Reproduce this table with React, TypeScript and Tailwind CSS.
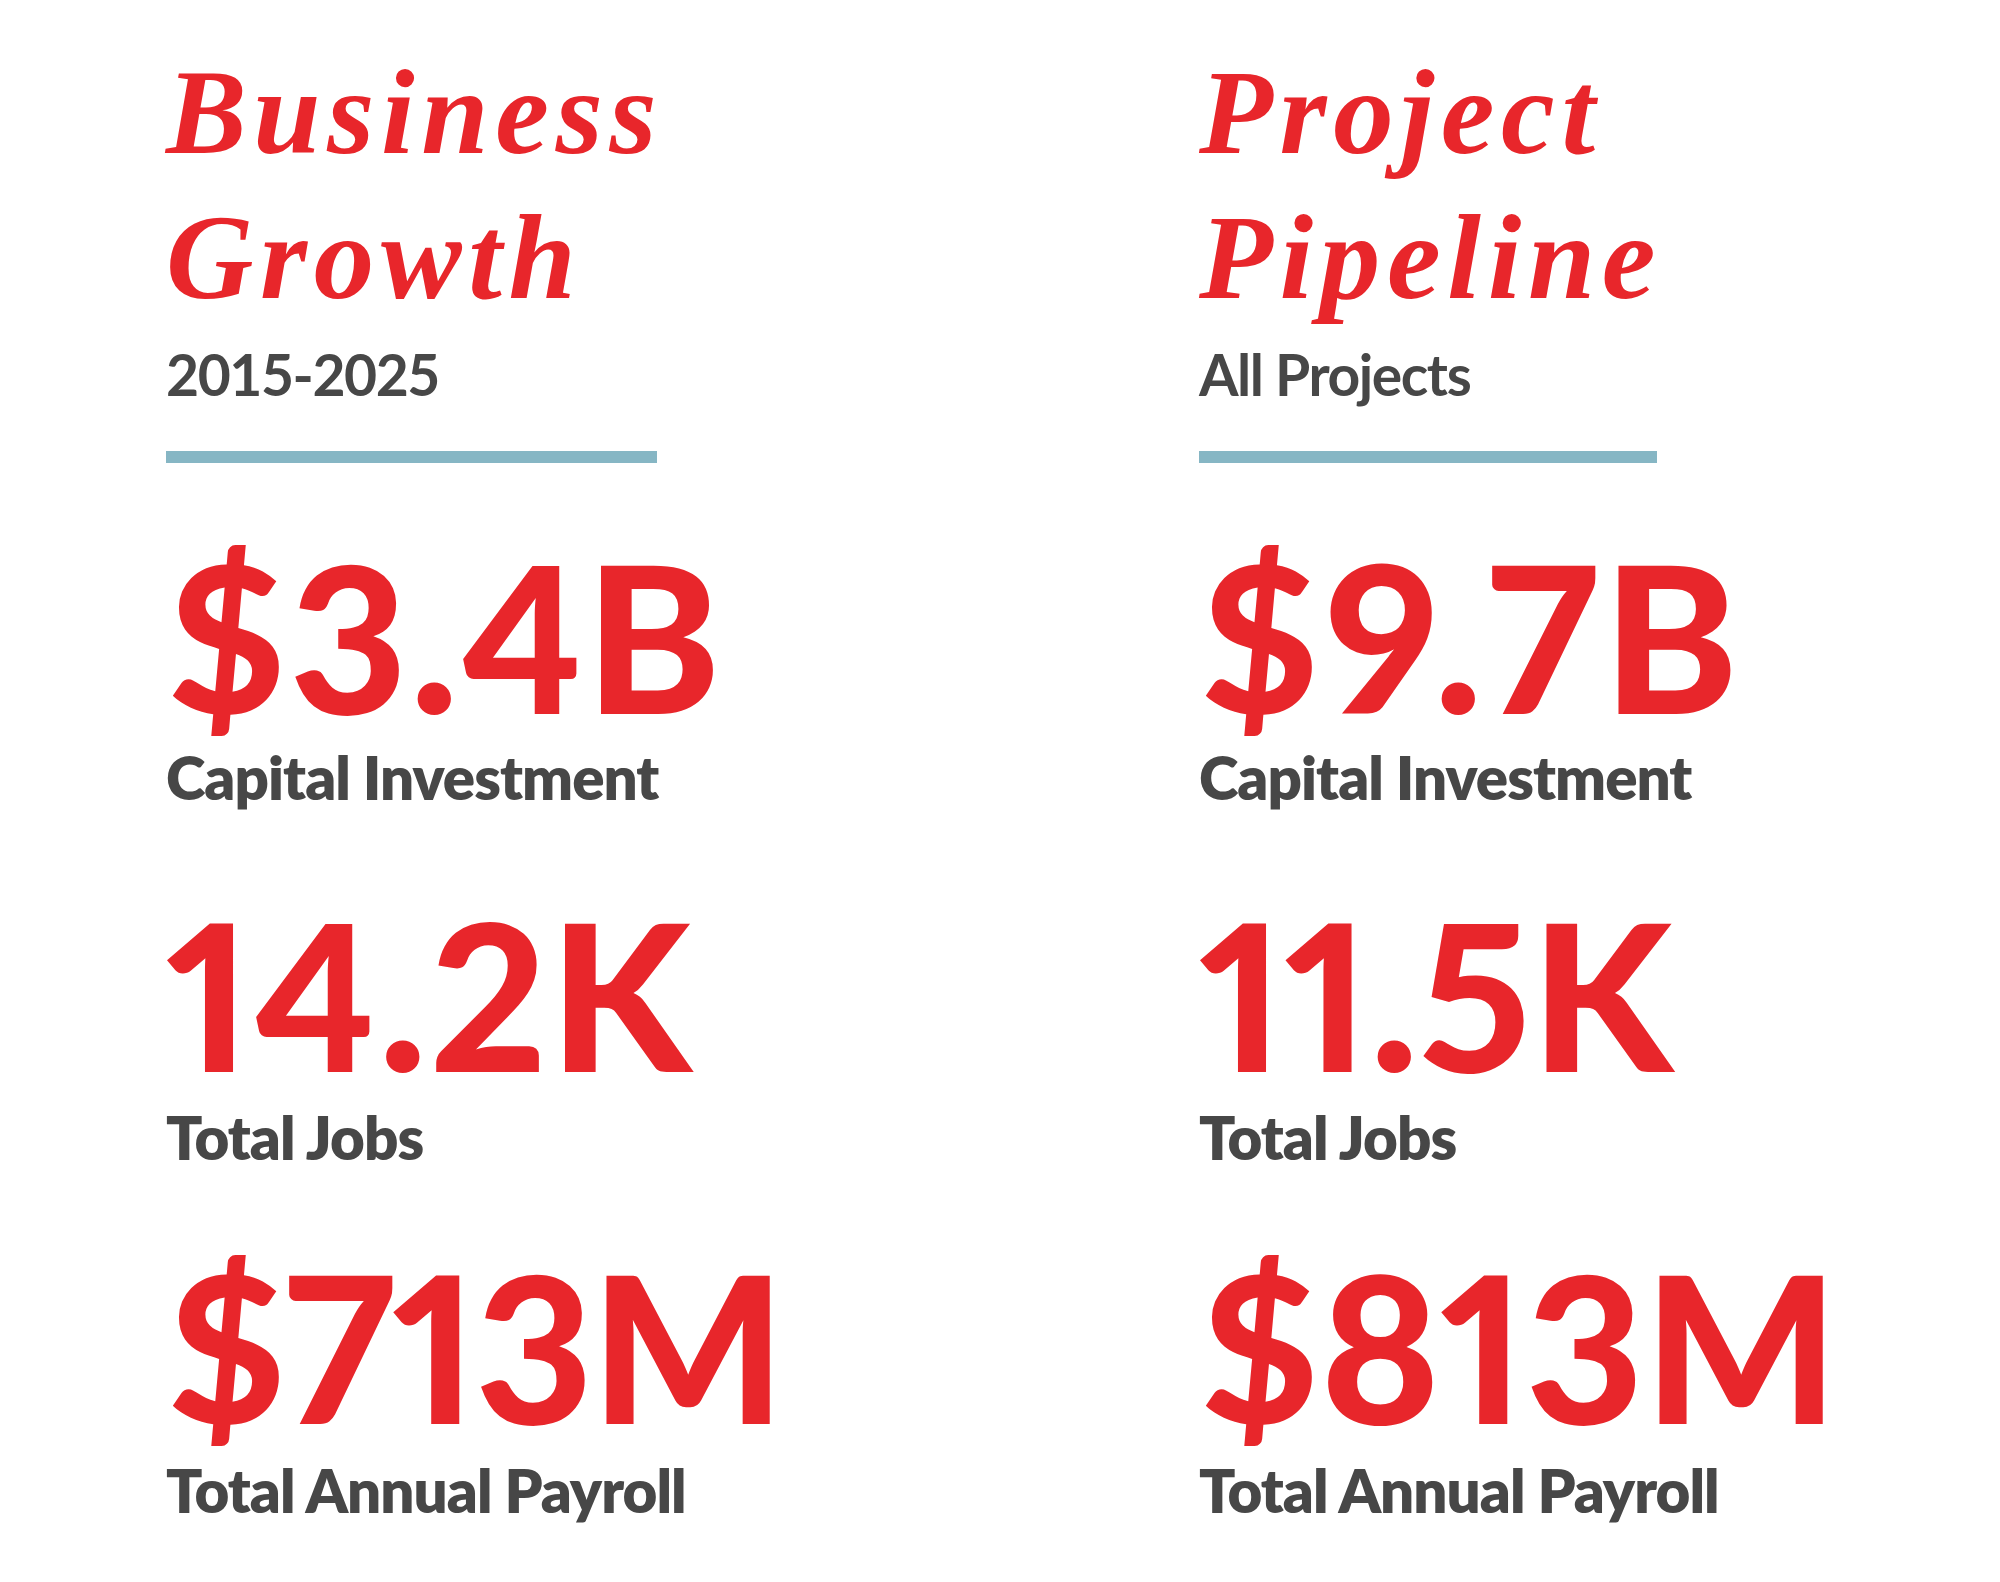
type Stat = { value: string; label: string; tracking: string };

type Panel = {
  title: [string, string];
  subtitle: string;
  ruleWidth: string;
  stats: Stat[];
};

const panels: Panel[] = [
  {
    title: ['Business', 'Growth'],
    subtitle: '2015-2025',
    ruleWidth: 'w-[491px]',
    stats: [
      { value: '$3.4B', label: 'Capital Investment', tracking: 'tracking-[0.012em]' },
      { value: '14.2K', label: 'Total Jobs', tracking: 'tracking-[0.012em]' },
      { value: '$713M', label: 'Total Annual Payroll', tracking: 'tracking-[-0.012em]' },
    ],
  },
  {
    title: ['Project', 'Pipeline'],
    subtitle: 'All Projects',
    ruleWidth: 'w-[458px]',
    stats: [
      { value: '$9.7B', label: 'Capital Investment', tracking: 'tracking-[0.026em]' },
      { value: '11.5K', label: 'Total Jobs', tracking: 'tracking-[0em]' },
      { value: '$813M', label: 'Total Annual Payroll', tracking: 'tracking-[0em]' },
    ],
  },
];

// gaps above each number, then above its label
const numberGap = ['mt-[70px]', 'mt-[84px]', 'mt-[76px]'];
const labelGap = ['mt-[10px]', 'mt-[12px]', 'mt-[13px]'];

function StatPanel({ panel }: { panel: Panel }) {
  return (
    <section className="flex flex-col">
      <h2 className="font-['Liberation_Serif',serif] text-[121px] leading-[145px] font-bold italic tracking-[0.055em] text-[#e8262b]">
        {panel.title[0]}
        <br />
        {panel.title[1]}
      </h2>
      <p className="mt-[16px] font-['Lato',sans-serif] text-[57px] leading-none font-bold tracking-[-0.025em] text-[#474747]">
        {panel.subtitle}
      </p>
      <div className={`mt-[48px] h-[12px] bg-[#86b6c4] ${panel.ruleWidth}`} />
      {panel.stats.map((s, i) => (
        <div key={s.label} className="flex flex-col">
          <p
            className={`${numberGap[i]} ${s.tracking} font-['Lato',sans-serif] text-[204px] leading-none font-black proportional-nums text-[#e8262b]`}
          >
            {s.value}
          </p>
          <p
            className={`${labelGap[i]} font-['Lato',sans-serif] text-[60px] leading-none font-extrabold tracking-[-0.016em] text-[#474747]`}
          >
            {s.label}
          </p>
        </div>
      ))}
    </section>
  );
}

export default function App() {
  return (
    <div className="grid min-h-[1582px] w-[2000px] grid-cols-[1033px_1fr] bg-white pt-[40px] pl-[166px]">
      {panels.map((p) => (
        <StatPanel key={p.subtitle} panel={p} />
      ))}
    </div>
  );
}
